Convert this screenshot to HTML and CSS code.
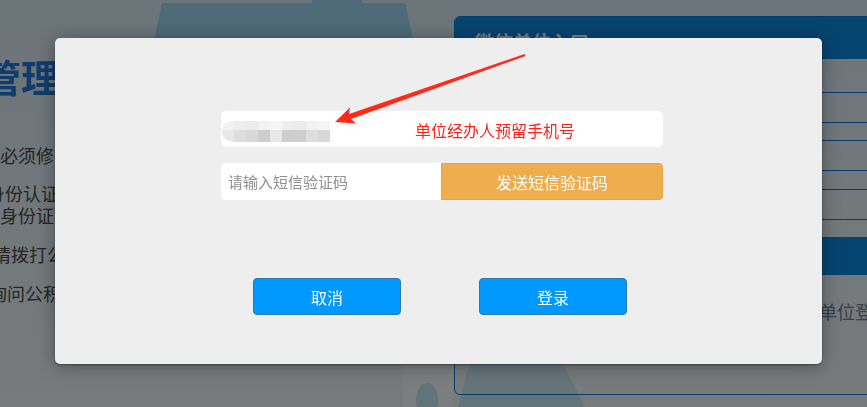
FILE: index.html
```html
<!DOCTYPE html>
<html lang="zh-CN">
<head>
    <meta charset="UTF-8">
    <meta name="viewport" content="width=device-width, initial-scale=1.0">
    <title>单位登录</title>
    <link rel="stylesheet" href="styles.css">
</head>
<body>
    <svg class="scenery" width="867" height="407" viewBox="0 0 867 407">
        <rect x="312" y="0" width="50" height="4" fill="#9cd6ee"/>
        <polygon points="162,3 405,3 420,70 148,70" fill="#9cd6ee"/>
        <rect x="403" y="364" width="51" height="43" fill="#f8fbfd"/>
        <ellipse cx="427" cy="400" rx="11" ry="17" fill="#c4e6f4"/>
        <polygon points="478,330 545,330 585,407 458,407" fill="#c4e6f4"/>
    </svg>

    <div class="page">
        <div class="intro">
            <h1 class="intro-title">管理中心</h1>
            <p class="tip">必须修改初始密码</p>
            <p class="tip cut-a">身份认证需要提供<br>身份证明材料</p>
            <p class="tip cut-b">请拨打公积金服务热线</p>
            <p class="tip cut-c">询问公积金中心</p>
        </div>

        <div class="login-panel">
            <div class="panel-head">微信单位入口</div>
            <div class="panel-body">
                <input class="panel-input" type="text">
                <input class="panel-input" type="text">
                <input class="panel-input" type="text">
                <div class="panel-btn"></div>
                <div class="panel-links">
                    <a>忘记密码？</a>
                    <a>单位登记注册</a>
                </div>
            </div>
        </div>
    </div>

    <div class="mask"></div>

    <div class="dialog">
        <div class="dialog-form">
            <div class="phone-field">
                <div class="mosaic">
                    <span class="m1"></span><span class="m2"></span><span class="m3"></span><span class="m1"></span><span class="m4"></span><span class="m2"></span><span class="m3"></span><span class="m1"></span><span class="m4"></span>
                    <span class="n1"></span><span class="n2"></span><span class="n3"></span><span class="n4"></span><span class="n1"></span><span class="n4"></span><span class="n4"></span><span class="n2"></span><span class="n3"></span>
                </div>
                <span class="phone-note">单位经办人预留手机号</span>
            </div>

            <div class="code-row">
                <input class="code-input" type="text" placeholder="请输入短信验证码">
                <button class="send-btn">发送短信验证码</button>
            </div>

            <div class="dialog-actions">
                <button class="action-btn">取消</button>
                <button class="action-btn">登录</button>
            </div>
        </div>
    </div>

    <svg class="arrow" width="867" height="407" viewBox="0 0 867 407">
        <polygon points="335,122 350,107.5 349,114 524.6,54 525.4,56 351,119 356,123.5" fill="#ff2a1a"/>
    </svg>
</body>
</html>
```

FILE: styles.css
```css
body {
    margin: 0;
    width: 867px;
    height: 407px;
    overflow: hidden;
    position: relative;
    font-family: "Noto Sans CJK SC", sans-serif;
    background: linear-gradient(#d8eaf4, #f0f6f9);
}
.scenery {
    position: absolute;
    left: 0;
    top: 0;
}
.page {
    position: relative;
    display: flex;
}

/* left column behind the dialog */
.intro {
    width: 454px;
    flex-shrink: 0;
}
.intro-title {
    margin: 54px 0 0;
    font-size: 38px;
    line-height: 44px;
    font-weight: bold;
    color: #1c78d8;
    text-indent: -17px;
    white-space: nowrap;
}
.tip {
    margin: 0 0 17px;
    font-size: 18px;
    line-height: 22px;
    color: #4a4a4a;
    white-space: nowrap;
}
.intro-title + .tip {
    margin-top: 46px;
    margin-bottom: 16px;
}
.cut-a {
    text-indent: -13px;
}
.cut-b {
    text-indent: -7px;
}
.cut-c {
    text-indent: -11px;
}

/* login panel on the right */
.login-panel {
    width: 440px;
    flex-shrink: 0;
    margin-top: 16px;
    height: 377px;
    border: 1px solid #1078d2;
    border-radius: 6px;
    overflow: hidden;
    background: rgba(240, 248, 252, 0.15);
}
.panel-head {
    height: 42px;
    background: #0c88e0;
    color: #fff;
    font-size: 19px;
    line-height: 50px;
    padding-left: 20px;
    font-weight: bold;
}
.panel-body {
    padding: 33px 20px 0;
    display: flex;
    flex-direction: column;
}
.panel-input {
    height: 31px;
    box-sizing: border-box;
    border: 1px solid #1078d2;
    background: transparent;
    margin: 0 0 17px;
}
.panel-input:nth-child(2) {
    margin-bottom: 18px;
}
.panel-btn {
    height: 38px;
    background: #0c88e0;
}
.panel-links {
    display: flex;
    gap: 254px;
    margin-top: 24px;
    font-size: 18px;
    line-height: 24px;
    color: #6a7f9c;
    white-space: nowrap;
}

/* dim layer */
.mask {
    position: fixed;
    inset: 0;
    background: rgba(0, 0, 0, 0.5);
}

/* dialog */
.dialog {
    position: absolute;
    left: 55px;
    top: 38px;
    width: 767px;
    height: 326px;
    background: #eeeeee;
    border-radius: 5px;
    box-shadow: 0 1px 2px rgba(0, 0, 0, 0.35), 0 2px 18px rgba(0, 0, 0, 0.35);
}
.dialog-form {
    width: 442px;
    margin-left: 166px;
    padding-top: 73px;
}
.phone-field {
    height: 36px;
    background: #fff;
    border-radius: 5px;
    display: flex;
    align-items: center;
    padding-left: 1px;
}
.mosaic {
    display: grid;
    grid-template-columns: repeat(9, 12px);
    grid-template-rows: 9px 12px;
    border-radius: 10px 0 0 10px;
    overflow: hidden;
    margin-top: 5px;
}
.m1 { background: #f2f2f2; }
.m2 { background: #eeeeee; }
.m3 { background: #ebebeb; }
.m4 { background: #f5f5f5; }
.n1 { background: #e8e8e8; }
.n2 { background: #dedede; }
.n3 { background: #d8d8d8; }
.n4 { background: #cecece; }
.phone-note {
    margin-left: 85px;
    font-size: 16px;
    color: #ff2418;
    margin-top: 1px;
}
.code-row {
    display: flex;
    height: 37px;
    margin-top: 16px;
}
.code-input {
    width: 220px;
    box-sizing: border-box;
    border: none;
    border-radius: 4px 0 0 4px;
    background: #fff;
    padding: 0 7px;
    font-family: inherit;
    font-size: 15px;
    color: #333;
    outline: none;
}
.code-input::placeholder {
    color: #8f8f8f;
}
.send-btn {
    width: 222px;
    border: 1px solid #e8a545;
    border-radius: 0 4px 4px 0;
    background: #efad4e;
    color: #fff;
    font-family: inherit;
    font-size: 16px;
    padding: 0;
}
.dialog-actions {
    display: flex;
    gap: 78px;
    margin-top: 78px;
    margin-left: 32px;
}
.action-btn {
    width: 148px;
    height: 37px;
    border: 1px solid #2c78b4;
    border-radius: 4px;
    background: #0099ff;
    color: #fff;
    font-family: inherit;
    font-size: 16px;
    padding: 0;
}

.arrow {
    position: absolute;
    left: 0;
    top: 0;
}
```
